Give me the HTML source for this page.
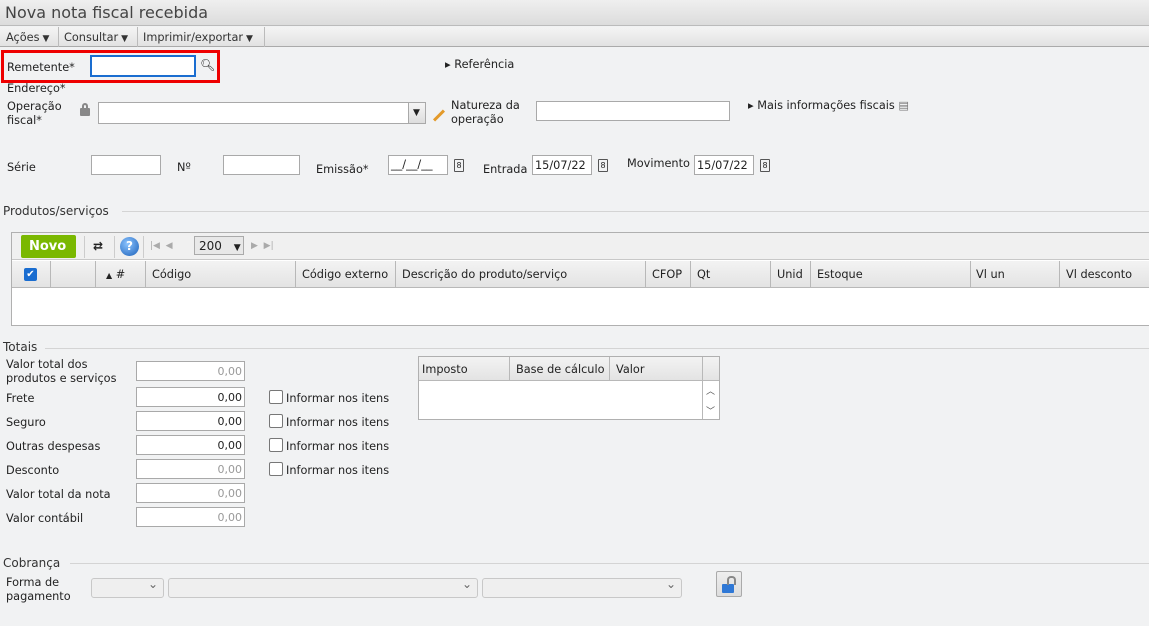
<!DOCTYPE html><html><head><meta charset="utf-8"><style>
*{box-sizing:border-box}
body{margin:0;width:1149px;height:626px;overflow:hidden;background:#f1f2f3;font-family:"DejaVu Sans","Liberation Sans",sans-serif;font-size:11.3px;color:#222;position:relative}
.a{position:absolute;white-space:nowrap}
.in{position:absolute;background:#fff;border:1px solid #a9a9a9;height:21px}
.num{font-size:11px;text-align:right;padding:3px 2px 0 0;color:#999}
.num.d{color:#222}
.cb{position:absolute;width:14px;height:14px;border:1px solid #777;border-radius:2px;background:#fff}
.sec{position:absolute;left:0;right:0;border-top:1px solid #d4d4d4}
.sel{position:absolute;height:20px;border:1px solid #c8c8c8;border-radius:3px;background:#efefef}
.sel:after{content:"⌄";position:absolute;right:5px;top:-2px;color:#666;font-size:12px}
.th{position:absolute;top:0;height:27px;border-right:1px solid #b8b8b8;padding:7px 0 0 6px}
.cal{position:absolute;width:10px;height:13px;border:1px solid #555;border-radius:1px;font-size:8px;text-align:center;line-height:11px}
.tb{position:absolute;top:27px;height:20px;border-right:1px solid #bbb;padding:4px 0 0 6px;color:#333}
.tb i{font-style:normal;font-size:9px;margin-left:3px}
</style></head><body>
<div class="a" style="left:0;top:0;width:1149px;height:26px;background:linear-gradient(#efefef,#dcdcdc);border-bottom:1px solid #bbb"></div>
<div class="a" style="left:5px;top:3px;font-size:16px;color:#444;font-family:'DejaVu Sans',sans-serif">Nova nota fiscal recebida</div>
<div class="a" style="left:0;top:27px;width:1149px;height:20px;background:linear-gradient(#f4f4f4,#e2e2e2);border-bottom:1px solid #aaa"></div>
<div class="tb" style="left:0;width:59px">Ações<i>▼</i></div>
<div class="tb" style="left:59px;width:79px;padding-left:5px">Consultar<i>▼</i></div>
<div class="tb" style="left:138px;width:127px;padding-left:5px">Imprimir/exportar<i>▼</i></div>

<div class="a" style="left:1px;top:50px;width:219px;height:33px;border:3px solid #e00"></div>
<div class="a" style="left:7px;top:61px">Remetente*</div>
<div class="in" style="left:90px;top:55px;width:106px;height:22px;border:2px solid #1a6dd0"></div>
<div class="a" style="left:200px;top:58px;font-size:12px">&#x1F50D;&#xFE0E;</div>
<div class="a" style="left:445px;top:58px">▸ Referência</div>
<div class="a" style="left:7px;top:82px">Endereço*</div>
<div class="a" style="left:7px;top:100px;line-height:14px">Operação<br>fiscal*</div>
<div class="a" style="left:80px;top:108px;width:10px;height:8px;background:#888;border-radius:1px"></div>
<div class="a" style="left:82px;top:103px;width:6px;height:7px;border:2px solid #888;border-bottom:none;border-radius:3px 3px 0 0"></div>
<div class="in" style="left:98px;top:102px;width:328px;height:22px"></div>
<div class="a" style="left:408px;top:102px;width:18px;height:22px;background:linear-gradient(#f5f5f5,#ddd);border:1px solid #a9a9a9;font-size:9px;padding:5px 0 0 4px">▼</div>
<div class="a" style="left:432px;top:114px;width:14px;height:3px;background:#e39a2a;transform:rotate(-45deg)"></div>
<div class="a" style="left:451px;top:99px;line-height:14px">Natureza da<br>operação</div>
<div class="in" style="left:536px;top:101px;width:194px;height:20px"></div>
<div class="a" style="left:748px;top:99px">▸ Mais informações fiscais <span style="color:#777">▤</span></div>

<div class="a" style="left:7px;top:161px">Série</div>
<div class="in" style="left:91px;top:155px;width:70px;height:20px"></div>
<div class="a" style="left:177px;top:161px">Nº</div>
<div class="in" style="left:223px;top:155px;width:77px;height:20px"></div>
<div class="a" style="left:316px;top:163px">Emissão*</div>
<div class="in" style="left:388px;top:155px;width:60px;height:20px;padding:2px 0 0 2px">__/__/__</div>
<div class="cal" style="left:454px;top:159px">8</div>
<div class="a" style="left:483px;top:163px">Entrada</div>
<div class="in" style="left:532px;top:155px;width:60px;height:20px;padding:3px 0 0 2px">15/07/22</div>
<div class="cal" style="left:598px;top:159px">8</div>
<div class="a" style="left:627px;top:157px">Movimento</div>
<div class="in" style="left:694px;top:155px;width:60px;height:20px;padding:3px 0 0 2px">15/07/22</div>
<div class="cal" style="left:760px;top:159px">8</div>

<div class="sec" style="top:211px;left:122px"></div>
<div class="a" style="left:3px;top:204px;font-size:12px;color:#333">Produtos/serviços</div>
<div class="a" style="left:11px;top:232px;width:1140px;height:94px;border:1px solid #b0b0b0;background:#fff"></div>
<div class="a" style="left:12px;top:233px;width:1138px;height:27px;background:#f0f0f0;border-bottom:1px solid #c8c8c8"></div>
<div class="a" style="left:21px;top:235px;width:55px;height:23px;background:#7ab800;border-radius:2px;color:#fff;font-weight:bold;font-size:13px;padding:4px 0 0 8px">Novo</div>
<div class="a" style="left:84px;top:236px;height:22px;border-left:1px solid #ccc"></div>
<div class="a" style="left:93px;top:239px;font-size:12px;font-weight:bold">⇄</div>
<div class="a" style="left:114px;top:236px;height:22px;border-left:1px solid #ccc"></div>
<div class="a" style="left:120px;top:237px;width:19px;height:19px;border-radius:50%;background:radial-gradient(circle at 40% 35%,#8cc4ff,#1a5fb8);color:#fff;font-weight:bold;font-size:12px;text-align:center;line-height:19px">?</div>
<div class="a" style="left:143px;top:236px;height:22px;border-left:1px solid #ccc"></div>
<div class="a" style="left:150px;top:241px;color:#aaa;font-size:9px">|◀ &nbsp;◀</div>
<div class="a" style="left:194px;top:236px;width:50px;height:19px;border:1px solid #aaa;background:#e8e8e8;padding:2px 0 0 4px;font-size:12px">200 <span style="font-size:9px;margin-left:8px">▼</span></div>
<div class="a" style="left:251px;top:241px;color:#aaa;font-size:9px">▶ &nbsp;▶|</div>
<div class="a" style="left:12px;top:261px;width:1138px;height:27px;background:linear-gradient(#f3f3f3,#e3e3e3);border-bottom:1px solid #b8b8b8">
<div class="th" style="left:0;width:39px;padding-top:6px"><span style="display:inline-block;width:13px;height:13px;background:#1a6dd0;border-radius:2px;color:#fff;font-size:10px;line-height:13px;text-align:center;margin-left:6px">✔</span></div>
<div class="th" style="left:39px;width:45px"></div>
<div class="th" style="left:84px;width:50px;padding-left:10px"><span style="font-size:8px">▲</span> #</div>
<div class="th" style="left:134px;width:150px">Código</div>
<div class="th" style="left:284px;width:100px">Código externo</div>
<div class="th" style="left:384px;width:250px">Descrição do produto/serviço</div>
<div class="th" style="left:634px;width:45px">CFOP</div>
<div class="th" style="left:679px;width:80px">Qt</div>
<div class="th" style="left:759px;width:40px">Unid</div>
<div class="th" style="left:799px;width:160px">Estoque</div>
<div class="th" style="left:959px;width:89px;padding-left:5px">Vl un</div>
<div class="th" style="left:1048px;width:100px">Vl desconto</div>
</div>

<div class="sec" style="top:348px;left:45px"></div>
<div class="a" style="left:3px;top:340px;font-size:12px;color:#333">Totais</div>
<div class="a" style="left:6px;top:358px;line-height:14px">Valor total dos<br>produtos e serviços</div>
<div class="in num" style="left:136px;top:361px;width:109px;height:20px">0,00</div>
<div class="a" style="left:6px;top:392px">Frete</div>
<div class="in num d" style="left:136px;top:387px;width:109px;height:20px">0,00</div>
<div class="a" style="left:6px;top:416px">Seguro</div>
<div class="in num d" style="left:136px;top:411px;width:109px;height:20px">0,00</div>
<div class="a" style="left:6px;top:440px">Outras despesas</div>
<div class="in num d" style="left:136px;top:435px;width:109px;height:20px">0,00</div>
<div class="a" style="left:6px;top:464px">Desconto</div>
<div class="in num" style="left:136px;top:459px;width:109px;height:20px">0,00</div>
<div class="a" style="left:6px;top:488px">Valor total da nota</div>
<div class="in num" style="left:136px;top:483px;width:109px;height:20px">0,00</div>
<div class="a" style="left:6px;top:512px">Valor contábil</div>
<div class="in num" style="left:136px;top:507px;width:109px;height:20px">0,00</div>
<div class="cb" style="left:269px;top:390px"></div><div class="a" style="left:286px;top:392px">Informar nos itens</div>
<div class="cb" style="left:269px;top:414px"></div><div class="a" style="left:286px;top:416px">Informar nos itens</div>
<div class="cb" style="left:269px;top:438px"></div><div class="a" style="left:286px;top:440px">Informar nos itens</div>
<div class="cb" style="left:269px;top:462px"></div><div class="a" style="left:286px;top:464px">Informar nos itens</div>

<div class="a" style="left:418px;top:356px;width:302px;height:64px;border:1px solid #b0b0b0;background:#fff"></div>
<div class="a" style="left:419px;top:357px;width:300px;height:24px;background:linear-gradient(#f3f3f3,#e3e3e3);border-bottom:1px solid #b8b8b8"></div>
<div class="a" style="left:422px;top:363px">Imposto</div>
<div class="a" style="left:509px;top:357px;height:24px;border-left:1px solid #b8b8b8"></div>
<div class="a" style="left:516px;top:363px">Base de cálculo</div>
<div class="a" style="left:609px;top:357px;height:24px;border-left:1px solid #b8b8b8"></div>
<div class="a" style="left:616px;top:363px">Valor</div>
<div class="a" style="left:702px;top:357px;height:62px;border-left:1px solid #b8b8b8"></div>
<div class="a" style="left:706px;top:384px;font-size:9px;color:#555">︿</div>
<div class="a" style="left:706px;top:404px;font-size:9px;color:#555">﹀</div>

<div class="sec" style="top:563px;left:70px"></div>
<div class="a" style="left:3px;top:556px;font-size:12px;color:#333">Cobrança</div>
<div class="a" style="left:6px;top:576px;line-height:14px">Forma de<br>pagamento</div>
<div class="sel" style="left:91px;top:578px;width:73px"></div>
<div class="sel" style="left:168px;top:578px;width:310px"></div>
<div class="sel" style="left:482px;top:578px;width:200px"></div>
<div class="a" style="left:716px;top:571px;width:26px;height:26px;border:1px solid #aaa;border-radius:2px;background:linear-gradient(#eee,#ddd)"></div>
<div class="a" style="left:722px;top:584px;width:12px;height:9px;background:#2f78d6;border-radius:1px"></div>
<div class="a" style="left:727px;top:576px;width:9px;height:9px;border:2px solid #888;border-bottom:none;border-radius:4px 4px 0 0"></div>
</body></html>
